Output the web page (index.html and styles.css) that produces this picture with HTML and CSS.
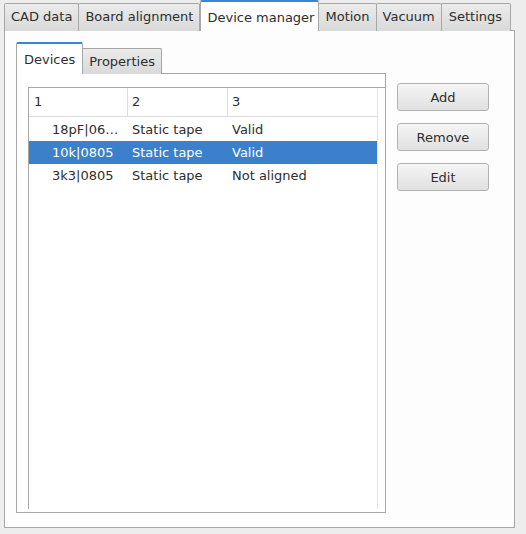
FILE: index.html
```html
<!DOCTYPE html>
<html>
<head>
<meta charset="utf-8">
<link rel="stylesheet" href="styles.css">
</head>
<body>
<div class="window">
  <div class="tabbar">
    <div class="tab">CAD data</div>
    <div class="tab">Board alignment</div>
    <div class="tab active">Device manager</div>
    <div class="tab">Motion</div>
    <div class="tab">Vacuum</div>
    <div class="tab last">Settings</div>
  </div>
  <div class="pane">
    <div class="devices">
      <div class="subtabs">
        <div class="subtab active">Devices</div>
        <div class="subtab">Properties</div>
      </div>
      <div class="subpane">
        <div class="tree">
          <div class="viewport">
            <div class="header">
              <div class="hcell c1">1</div>
              <div class="hcell c2">2</div>
              <div class="hcell c3">3</div>
            </div>
            <div class="row">
              <div class="cell c1 name">18pF|06…</div>
              <div class="cell c2">Static tape</div>
              <div class="cell c3">Valid</div>
            </div>
            <div class="row selected">
              <div class="cell c1 name">10k|0805</div>
              <div class="cell c2">Static tape</div>
              <div class="cell c3">Valid</div>
            </div>
            <div class="row">
              <div class="cell c1 name">3k3|0805</div>
              <div class="cell c2">Static tape</div>
              <div class="cell c3">Not aligned</div>
            </div>
          </div>
        </div>
      </div>
    </div>
    <div class="buttons">
      <div class="btn">Add</div>
      <div class="btn">Remove</div>
      <div class="btn">Edit</div>
    </div>
  </div>
</div>
</body>
</html>
```
FILE: styles.css
```css
html, body {
  margin: 0;
  padding: 0;
  background: #ededed;
}
body {
  font-family: "DejaVu Sans", sans-serif;
  font-size: 13px;
  color: #2e2e2e;
}
.window {
  padding-left: 4px;
  width: 511px;
}
.tabbar {
  display: flex;
  align-items: flex-end;
  height: 31px;
  position: relative;
  z-index: 1;
}
.tab {
  box-sizing: border-box;
  height: 28px;
  line-height: 26px;
  padding: 0 6px;
  border: 1px solid #a7a7a7;
  border-bottom: none;
  border-radius: 2px 2px 0 0;
  background: linear-gradient(#ebebeb, #d9d9d9);
  margin-left: -1px;
  white-space: nowrap;
}
.tab:first-child {
  margin-left: 0;
}
.tab.last {
  padding: 0 8px 0 7px;
}
.tab.active {
  height: 31px;
  line-height: 31px;
  background: #fdfdfd;
  border-top: 2px solid #3b85d6;
  padding: 0 4px 0 6px;
  margin-left: 0;
  margin-right: -1px;
  position: relative;
  z-index: 2;
}
.tab.active + .tab { margin-left: 0; }
.pane {
  box-sizing: border-box;
  width: 511px;
  height: 498px;
  margin-top: -1px;
  border: 1px solid #a7a7a7;
  background: #fdfdfd;
  padding: 11px 0 0 11px;
  display: flex;
  gap: 11px;
}
.devices {
  width: 370px;
  display: flex;
  flex-direction: column;
}
.subtabs {
  display: flex;
  align-items: flex-end;
  height: 32px;
  position: relative;
  z-index: 1;
}
.subtab {
  box-sizing: border-box;
  height: 26px;
  line-height: 25px;
  padding: 0 6px;
  border: 1px solid #a7a7a7;
  border-bottom: none;
  border-radius: 2px 2px 0 0;
  background: linear-gradient(#ebebeb, #d9d9d9);
  white-space: nowrap;
}
.subtab.active {
  height: 32px;
  line-height: 32px;
  background: #ffffff;
  border-top: 2px solid #3b85d6;
  padding: 0 7px;
  margin-right: -1px;
  position: relative;
  z-index: 2;
}
.subpane {
  box-sizing: border-box;
  height: 440px;
  margin-top: -1px;
  border: 1px solid #a7a7a7;
  background: #ffffff;
  padding: 13px 0 3px 11px;
  display: flex;
  overflow: hidden;
}
.tree {
  flex: 1;
  border-top: 1px solid #a7a7a7;
  border-left: 1px solid #a7a7a7;
  display: flex;
}
.viewport {
  width: 348px;
  border-right: 1px solid #e4e4e4;
}
.header {
  display: flex;
  height: 28px;
  border-bottom: 1px solid #dedede;
  margin-bottom: 1px;
}
.hcell {
  box-sizing: border-box;
  line-height: 28px;
  padding-left: 5px;
}
.c1 { width: 99px; }
.c2 { width: 100px; }
.c3 { flex: 1; }
.hcell.c1, .hcell.c2 { border-right: 1px solid #dedede; }
.hcell.c2, .hcell.c3 { padding-left: 4px; }
.row {
  display: flex;
  height: 23px;
  line-height: 23px;
}
.row.selected {
  background: #3b80cb;
  color: #ffffff;
}
.cell {
  box-sizing: border-box;
  padding-left: 4px;
  white-space: nowrap;
}
.cell.name {
  padding-left: 23px;
}
.cell.c1 { width: 99px; }
.buttons {
  display: flex;
  flex-direction: column;
  gap: 12px;
  padding-top: 41px;
}
.btn {
  box-sizing: border-box;
  width: 92px;
  height: 28px;
  line-height: 28px;
  text-align: center;
  border: 1px solid #b2b2b2;
  border-radius: 3px;
  background: linear-gradient(#f5f5f5, #e1e1e1);
}
```
